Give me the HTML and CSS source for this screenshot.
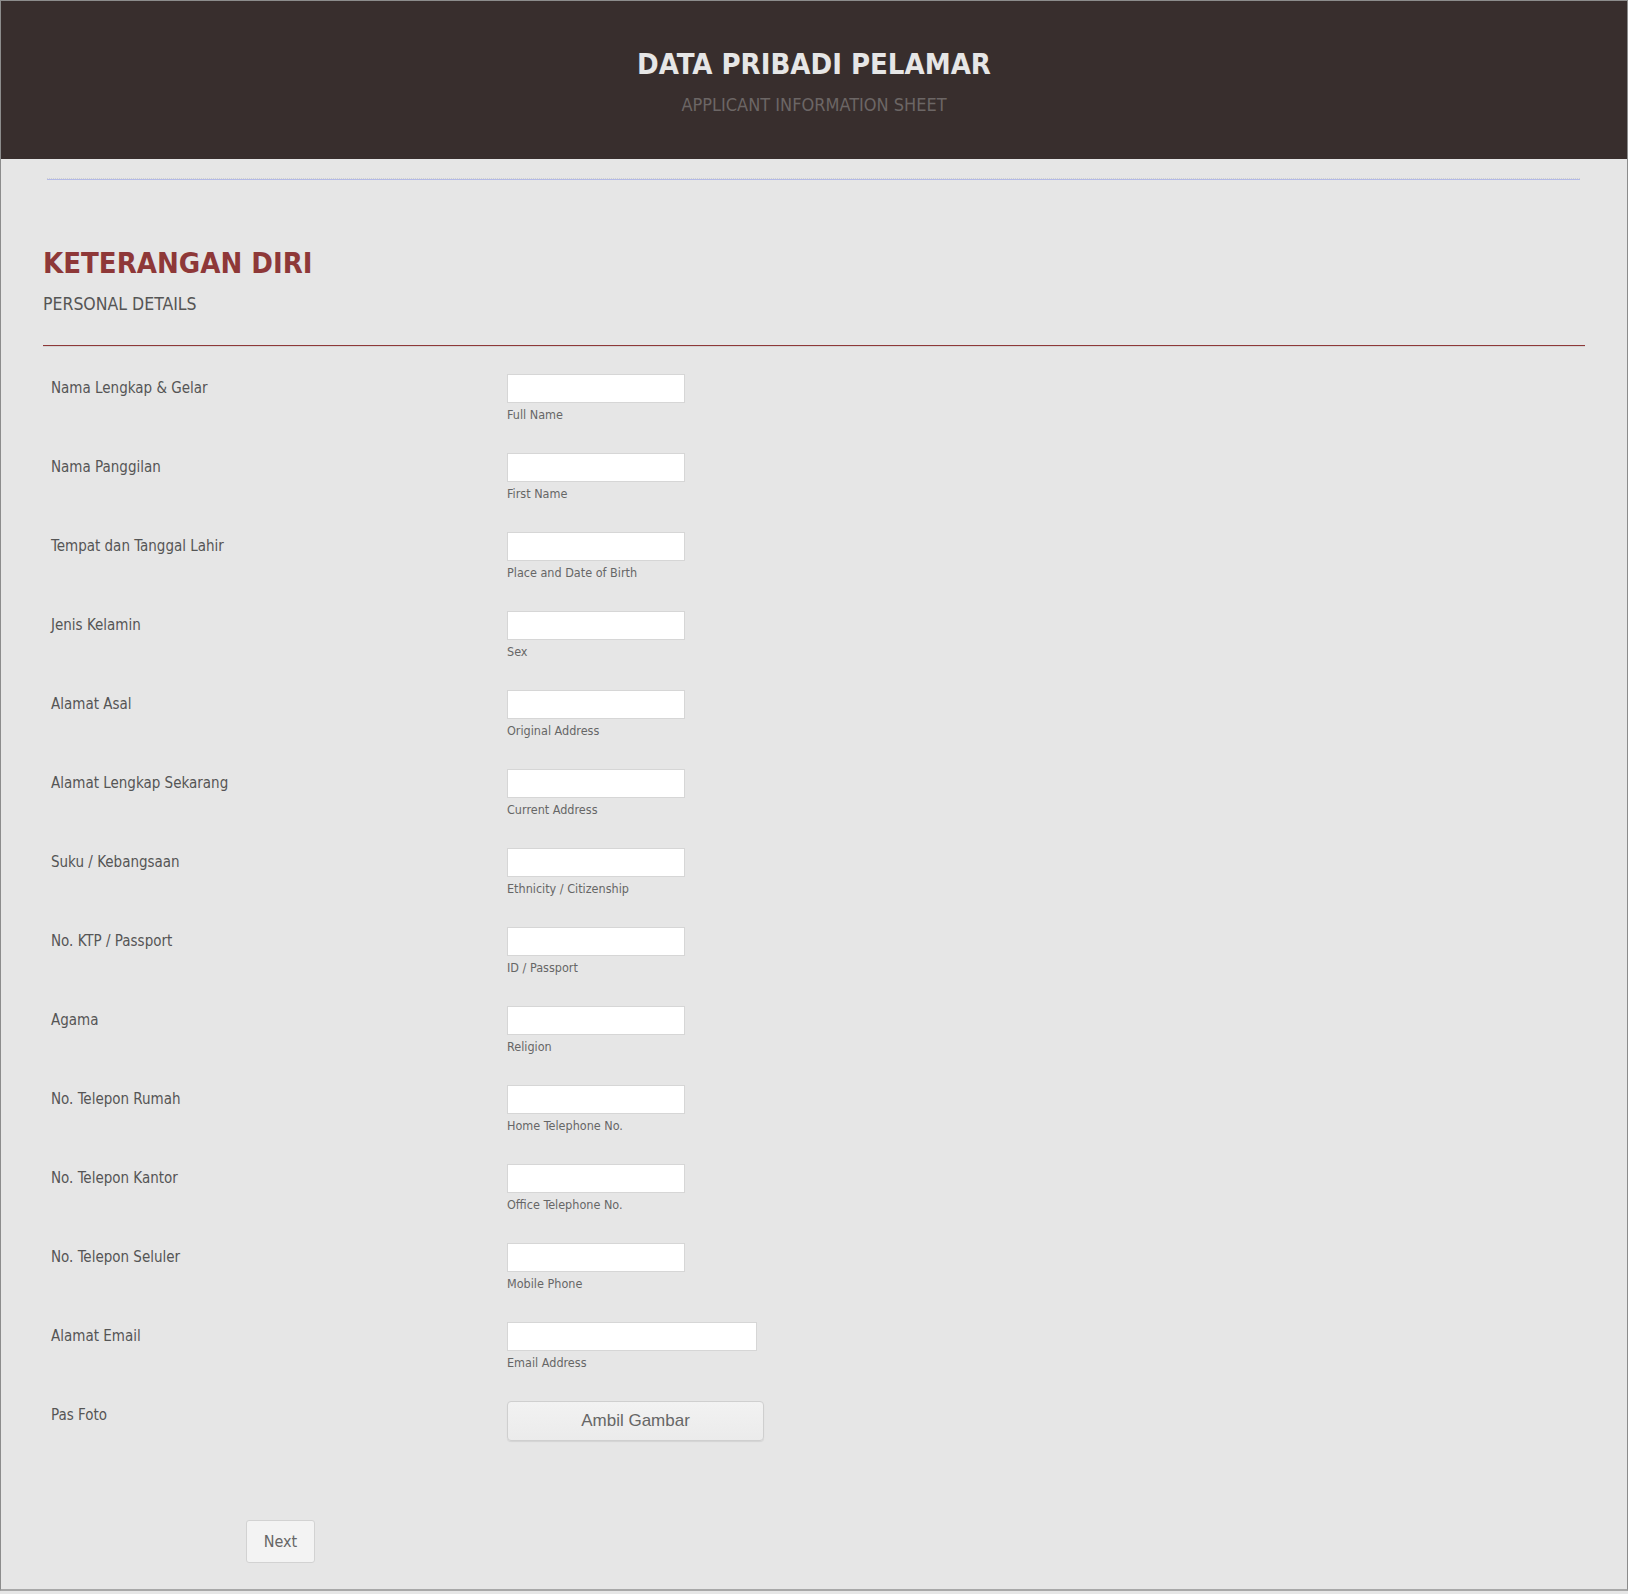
FILE: index.html
```html
<!DOCTYPE html>
<html lang="id">
<head>
<meta charset="utf-8">
<title>Data Pribadi Pelamar</title>
<link rel="stylesheet" href="styles.css">
</head>
<body>
<div class="page">
  <header class="header">
    <h1 class="title">DATA PRIBADI PELAMAR</h1>
    <div class="subtitle">APPLICANT INFORMATION SHEET</div>
  </header>
  <div class="blue-rule"></div>
  <section class="section">
    <h2 class="section-title">KETERANGAN DIRI</h2>
    <div class="section-sub">PERSONAL DETAILS</div>
    <div class="red-rule"></div>
    <div class="rows">
      <div class="row"><div class="label">Nama Lengkap &amp; Gelar</div><div class="field"><input class="input" type="text"><div class="hint">Full Name</div></div></div>
      <div class="row"><div class="label">Nama Panggilan</div><div class="field"><input class="input" type="text"><div class="hint">First Name</div></div></div>
      <div class="row"><div class="label">Tempat dan Tanggal Lahir</div><div class="field"><input class="input" type="text"><div class="hint">Place and Date of Birth</div></div></div>
      <div class="row"><div class="label">Jenis Kelamin</div><div class="field"><input class="input" type="text"><div class="hint">Sex</div></div></div>
      <div class="row"><div class="label">Alamat Asal</div><div class="field"><input class="input" type="text"><div class="hint">Original Address</div></div></div>
      <div class="row"><div class="label">Alamat Lengkap Sekarang</div><div class="field"><input class="input" type="text"><div class="hint">Current Address</div></div></div>
      <div class="row"><div class="label">Suku / Kebangsaan</div><div class="field"><input class="input" type="text"><div class="hint">Ethnicity / Citizenship</div></div></div>
      <div class="row"><div class="label">No. KTP / Passport</div><div class="field"><input class="input" type="text"><div class="hint">ID / Passport</div></div></div>
      <div class="row"><div class="label">Agama</div><div class="field"><input class="input" type="text"><div class="hint">Religion</div></div></div>
      <div class="row"><div class="label">No. Telepon Rumah</div><div class="field"><input class="input" type="text"><div class="hint">Home Telephone No.</div></div></div>
      <div class="row"><div class="label">No. Telepon Kantor</div><div class="field"><input class="input" type="text"><div class="hint">Office Telephone No.</div></div></div>
      <div class="row"><div class="label">No. Telepon Seluler</div><div class="field"><input class="input" type="text"><div class="hint">Mobile Phone</div></div></div>
      <div class="row"><div class="label">Alamat Email</div><div class="field"><input class="input input-wide" type="email"><div class="hint">Email Address</div></div></div>
      <div class="row"><div class="label">Pas Foto</div><div class="field"><button class="upload" type="button">Ambil Gambar</button></div></div>
    </div>
    <div class="actions"><button class="next" type="button">Next</button></div>
  </section>
</div>
</body>
</html>
```
FILE: styles.css
```css
html, body {
  margin: 0;
  padding: 0;
  background: #e6e6e6;
}
body {
  font-family: "DejaVu Sans Condensed", "DejaVu Sans", sans-serif;
  color: #555;
}
.page {
  border: 1px solid #8c8c8c;
  border-bottom: 2px solid #a8a8a8;
  background: #e6e6e6;
  height: 1591px;
  box-sizing: border-box;
}
.header {
  background: #382e2d;
  height: 158px;
  box-sizing: border-box;
  padding-top: 45px;
  text-align: center;
}
.title {
  margin: 0;
  font-size: 29px;
  line-height: 36px;
  font-weight: bold;
  color: #e6e6e6;
}
.subtitle {
  margin-top: 13px;
  font-size: 18px;
  line-height: 20px;
  color: #6c6665;
}
.blue-rule {
  margin: 19px 47px 0 46px;
  height: 0;
  border-top: 1px dotted #d0d0d0;
  border-bottom: 1px solid #b3bae6;
}
.section {
  padding: 0 42px 0 42px;
}
.section-title {
  margin: 66px 0 0 0;
  font-size: 29px;
  line-height: 34px;
  font-weight: bold;
  color: #8e3838;
}
.section-sub {
  margin-top: 14px;
  font-size: 17.5px;
  line-height: 20px;
  color: #555;
}
.red-rule {
  margin-top: 31px;
  border-top: 1px solid #8e3838;
  border-bottom: 1px solid #d4d4d4;
}
.rows {
  margin-top: 27px;
}
.row {
  display: grid;
  grid-template-columns: 456px 1fr;
  height: 79px;
  padding-left: 8px;
}
.label {
  font-size: 15px;
  line-height: 20px;
  padding-top: 4px;
  color: #555;
}
.field {
  display: flex;
  flex-direction: column;
  align-items: flex-start;
}
.input {
  width: 178px;
  height: 29px;
  box-sizing: border-box;
  border: 1px solid #d6d6d6;
  background: #fff;
  margin: 0;
  padding: 0 4px;
}
.input-wide {
  width: 250px;
}
.hint {
  margin-top: 4px;
  font-size: 12.5px;
  line-height: 15px;
  color: #666;
}
.upload {
  width: 257px;
  height: 40px;
  border: 1px solid #cfcfcf;
  border-radius: 4px;
  background: linear-gradient(#f2f2f2, #ebebeb);
  font-family: "Liberation Sans", Arial, sans-serif;
  font-size: 17px;
  color: #666;
  box-shadow: 0 1px 1px rgba(0,0,0,0.08);
  cursor: pointer;
}
.actions {
  padding-left: 203px;
  margin-top: 40px;
}
.next {
  width: 69px;
  height: 43px;
  border: 1px solid #d2d2d2;
  border-radius: 3px;
  background: #f3f3f3;
  font-family: "DejaVu Sans Condensed", "DejaVu Sans", sans-serif;
  font-size: 16px;
  color: #666;
  cursor: pointer;
}
```
